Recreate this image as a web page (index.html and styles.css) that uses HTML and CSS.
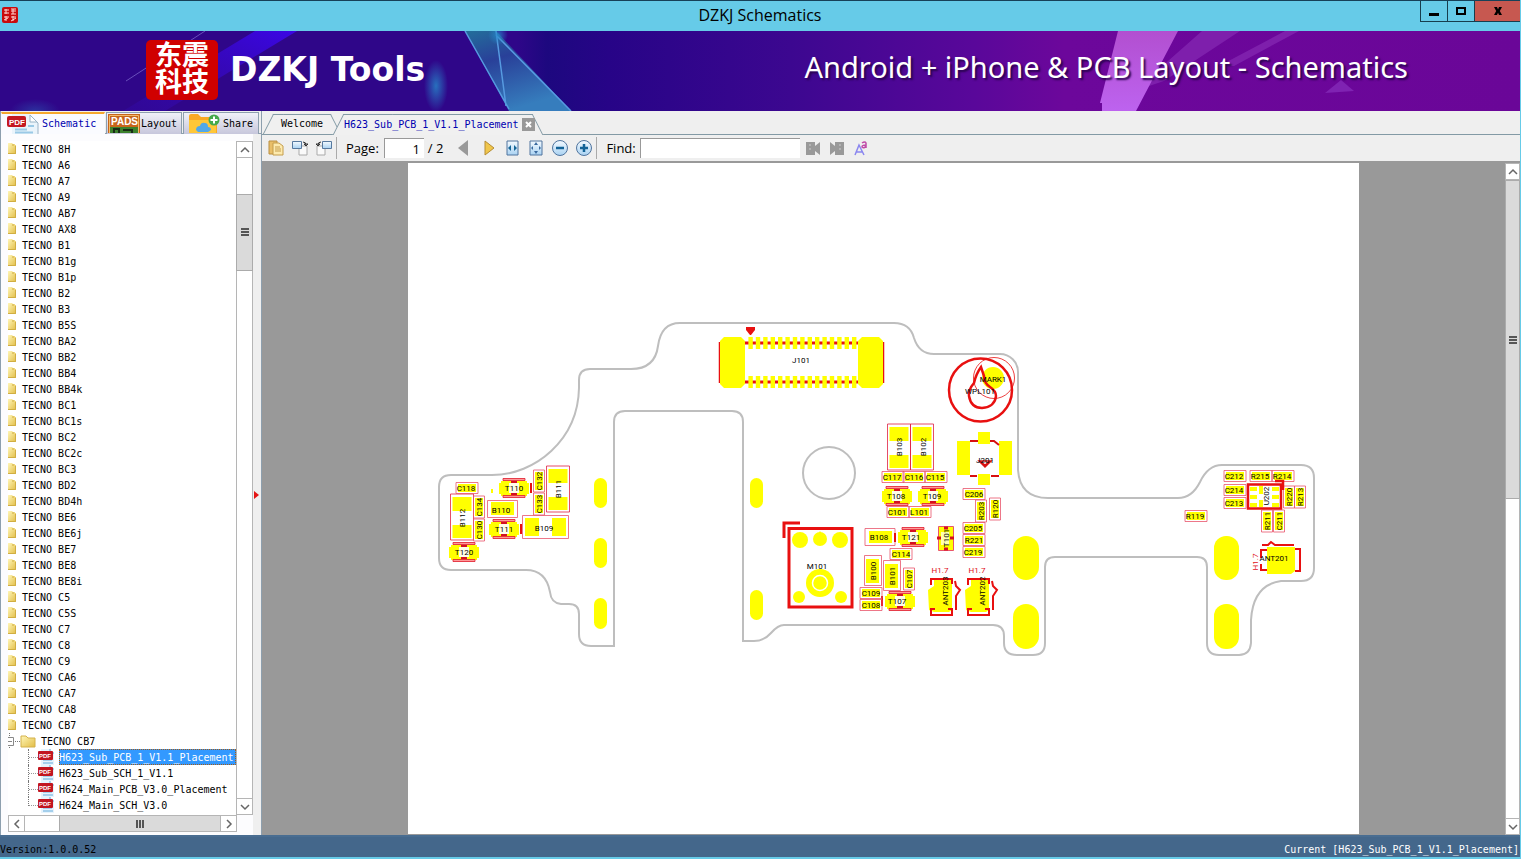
FILE: index.html
```html
<!DOCTYPE html>
<html lang="en">
<head>
<meta charset="utf-8">
<title>DZKJ Schematics</title>
<link rel="stylesheet" href="styles.css">
</head>
<body>
<svg class="defs" aria-hidden="true">
  <defs>
    <linearGradient id="gold" x2="1" y2="1"><stop stop-color="#fff6b8"/><stop offset="1" stop-color="#e2bd45"/></linearGradient>
    <linearGradient id="blue" x2="0" y2="1"><stop stop-color="#f4faff"/><stop offset="1" stop-color="#a9d2f2"/></linearGradient>
    <symbol id="folder" viewBox="0 0 9 12"><path d="M0 0h4l1 1h2v1h1v9H0z" fill="url(#gold)"/><path d="M0 10.500h7.500V3M5 1v2" fill="none" stroke="#d1ae42"/></symbol>
    <symbol id="pdf" viewBox="0 0 18 16"><path d="M4 0h9l4 4v12H4z" fill="#e6f3fc"/><path d="M13 0v4h4M6 11h9M6 14h10" fill="none" stroke="#8fc3e6" stroke-width="1.500"/><rect x="1" y="2" width="15" height="9" rx="1" fill="#c21620"/><text x="2" y="9" class="pdf-mark">PDF</text></symbol>
    <symbol id="t" viewBox="-16 -11 32 22"><path d="M-13-7h26v2h2V6h-2v2h-26V6h-2V-5h2z" fill="#ff0"/><path d="M-5-5H5V5H-5z" fill="#fffde8"/><path d="M-11-9.500h22v2h-22zM-11 7.500h22v2h-22z" fill="#f99" stroke="#e01828" stroke-width=".8"/><path d="M-3-7h6v2h-6zM-3 5h6v2h-6z" fill="#d41020"/></symbol>
    <symbol id="c" viewBox="-12 -6 24 12"><path d="M-9-4H9V4H-9z" fill="#ff0"/><path d="M-11-5.500h22v11h-22z" fill="none" stroke="#e9546b" stroke-width=".8"/></symbol>
    <symbol id="cv" viewBox="-6 -12 12 24"><path d="M-4-9H4V9H-4z" fill="#ff0"/><path d="M-5.500-11h11v22h-11z" fill="none" stroke="#e9546b" stroke-width=".8"/></symbol>
    <symbol id="b" viewBox="-12 -24 24 48"><path d="M-9.500-20h19v14h-19zM-9.500 8h19v13h-19z" fill="#ff0"/><path d="M-11.500-23h23v46h-23z" fill="none" stroke="#e02040" stroke-width=".8"/></symbol>
    <symbol id="ant" viewBox="-18 -23 38 46"><path d="M-9-15H9V16l-3 2H-9l-5-2-1-20 6-4z" fill="#ff0"/><path d="M-12-9v-6H9v5M-12 15v6H9v-6zM12-13l1 5 4 4-4 6v14" fill="none" stroke="#e81010" stroke-width="2"/><path d="M-8-14H5V17H-8z" fill="#ff0"/></symbol>
  </defs>
</svg>
<div class="app">
  <header class="titlebar">
    <svg class="app-icon" viewBox="0 0 16 16"><rect width="16" height="16" rx="2" fill="#c90c0c"/><path d="M2 3h5M4 2v5M2 6h5M9 2h5M9 4h5M9 7h5M11 2v5M2 10h5M4 9v5M2 13l4-2M9 10h5M11 9v5M9 14l5-3" stroke="#ffd9d5"/></svg>
    <h1>DZKJ Schematics</h1>
    <div class="window-buttons">
      <button aria-label="Minimize"><svg viewBox="0 0 12 12"><path d="M1 8h10v3H1z"/></svg></button>
      <button aria-label="Maximize"><svg viewBox="0 0 12 12"><path d="M1 2h10v8H1zM3 4v4h6V4z" fill-rule="evenodd"/></svg></button>
      <button class="close" aria-label="Close"><svg viewBox="0 0 12 12"><path d="M2 2h3l1 2.500L7 2h3L7.800 6 10 10H7L6 7.700 5 10H2l2.200-4z"/></svg></button>
    </div>
  </header>

  <div class="banner">
    <svg class="banner-art" viewBox="0 0 1520 80" preserveAspectRatio="none">
      <defs>
        <linearGradient id="bg"><stop stop-color="#2f0689"/><stop offset=".34" stop-color="#2f0689"/><stop offset=".36" stop-color="#1d087f"/><stop offset=".4" stop-color="#270487"/><stop offset=".52" stop-color="#3c0790"/><stop offset=".64" stop-color="#59079a"/><stop offset=".7" stop-color="#6c079b"/><stop offset="1" stop-color="#6a0698"/></linearGradient>
        <linearGradient id="ice" x2=".4" y2="1"><stop stop-color="#236f9b"/><stop offset=".4" stop-color="#294099"/><stop offset="1" stop-color="#367dbd"/></linearGradient>
        <linearGradient id="pink" x2="0" y2="1"><stop stop-color="#b24fd0"/><stop offset="1" stop-color="#bd63ef"/></linearGradient>
        <linearGradient id="ray" x1="1" y2="1" x2="0"><stop stop-color="#3b06e6"/><stop offset="1" stop-color="#340bb0" stop-opacity=".3"/></linearGradient>
        <radialGradient id="glow"><stop stop-color="#268acb" stop-opacity=".8"/><stop offset="1" stop-color="#268acb" stop-opacity="0"/></radialGradient>
      </defs>
      <path fill="url(#bg)" d="M0 0h1520v80H0z"/>
      <path fill="url(#ray)" d="M255 0h42L165 80h-42z"/>
      <path stroke="#694fbb" d="M205 0l-23 15M160 28l-34 22"/>
      <ellipse cx="436" cy="55" rx="12" ry="26" fill="url(#glow)"/>
      <ellipse cx="35" cy="80" rx="25" ry="12" fill="url(#glow)" opacity=".4"/>
      <path fill="url(#ice)" d="M465 0h31l75 80h-62z"/>
      <path fill="none" stroke="#569ae0" stroke-width="1.500" d="M465 0l44 78M496 0l10 75M496 4l75 76"/>
      <circle cx="498" cy="4" r="10" fill="url(#glow)"/>
      <path fill="#8428b2" d="M1202 0h38l-76 50-30 10zM1285 0h14l-65 35h-15z" opacity=".75"/>
      <path fill="url(#pink)" d="M1118 0h60l-42 80h-34v-8h-2z"/>
      <path fill="#842bb8" d="M1341 49l13 11-29 2z" opacity=".8"/>
    </svg>
    <div class="brand"><span class="seal"><span>东震</span><span>科技</span></span><span class="brand-name">DZKJ Tools</span></div>
    <div class="tagline">Android + iPhone &amp; PCB Layout - Schematics</div>
  </div>

  <main class="workspace">
    <aside class="sidebar">
      <nav class="side-tabs">
        <button class="side-tab active"><svg width="32" height="20" viewBox="0 0 32 20"><path d="M5 0h18l8 8v12H5z" fill="#eaf4fb"/><path d="M23 1v7h7" fill="#fff" stroke="#9ab4c6"/><path d="M23 1l8 8v11" fill="none" stroke="#9ab4c6"/><path d="M8 15.500h12M8 18.500h18M21 12h6" fill="none" stroke="#9ac9e6" stroke-width="2"/><rect y="2" width="19" height="11" rx="2" fill="#c41720"/><text x="2" y="11" class="pdf-big">PDF</text></svg>Schematic</button>
        <button class="side-tab"><svg width="32" height="20" viewBox="0 0 32 20"><path fill="#c7651b" d="M0 1h32v19H0z"/><path fill="#3c812c" d="M2 14h28v6H2z"/><path d="M6 20v-4h5v4M15 17h9v3" fill="none" stroke="#182c15" stroke-width="2"/><path fill="none" stroke="#f0bc6d" d="M1.500 20V2.500h29V20"/><text x="3" y="12" class="pads">PADS</text></svg>Layout</button>
        <button class="side-tab share"><svg width="32" height="20" viewBox="0 0 32 20"><path d="M1 3q0-2 2-2h7l3 3h14q2 0 2 2v14H1z" fill="#f9a823"/><path d="M1 20V7h27v13z" fill="#ffc738"/><path d="M8 17q0-4 4-4 1-4 5-3 3 0 3 4 3 0 3 3l-3 2H10z" fill="#52a8e9"/><circle cx="26" cy="7" r="5.500" fill="#45a94b"/><path d="M26 3.500v7M22.500 7h7" stroke="#fff" stroke-width="2"/></svg>Share</button>
      </nav>
      <div class="tree-box">
        <div class="tree-row-box">
        <ul class="tree">
          <li><svg><use href="#folder"/></svg>TECNO 8H</li><li><svg><use href="#folder"/></svg>TECNO A6</li><li><svg><use href="#folder"/></svg>TECNO A7</li><li><svg><use href="#folder"/></svg>TECNO A9</li><li><svg><use href="#folder"/></svg>TECNO AB7</li><li><svg><use href="#folder"/></svg>TECNO AX8</li><li><svg><use href="#folder"/></svg>TECNO B1</li><li><svg><use href="#folder"/></svg>TECNO B1g</li><li><svg><use href="#folder"/></svg>TECNO B1p</li><li><svg><use href="#folder"/></svg>TECNO B2</li><li><svg><use href="#folder"/></svg>TECNO B3</li><li><svg><use href="#folder"/></svg>TECNO B5S</li><li><svg><use href="#folder"/></svg>TECNO BA2</li><li><svg><use href="#folder"/></svg>TECNO BB2</li><li><svg><use href="#folder"/></svg>TECNO BB4</li><li><svg><use href="#folder"/></svg>TECNO BB4k</li><li><svg><use href="#folder"/></svg>TECNO BC1</li><li><svg><use href="#folder"/></svg>TECNO BC1s</li><li><svg><use href="#folder"/></svg>TECNO BC2</li><li><svg><use href="#folder"/></svg>TECNO BC2c</li><li><svg><use href="#folder"/></svg>TECNO BC3</li><li><svg><use href="#folder"/></svg>TECNO BD2</li><li><svg><use href="#folder"/></svg>TECNO BD4h</li><li><svg><use href="#folder"/></svg>TECNO BE6</li><li><svg><use href="#folder"/></svg>TECNO BE6j</li><li><svg><use href="#folder"/></svg>TECNO BE7</li><li><svg><use href="#folder"/></svg>TECNO BE8</li><li><svg><use href="#folder"/></svg>TECNO BE8i</li><li><svg><use href="#folder"/></svg>TECNO C5</li><li><svg><use href="#folder"/></svg>TECNO C5S</li><li><svg><use href="#folder"/></svg>TECNO C7</li><li><svg><use href="#folder"/></svg>TECNO C8</li><li><svg><use href="#folder"/></svg>TECNO C9</li><li><svg><use href="#folder"/></svg>TECNO CA6</li><li><svg><use href="#folder"/></svg>TECNO CA7</li><li><svg><use href="#folder"/></svg>TECNO CA8</li><li><svg><use href="#folder"/></svg>TECNO CB7</li>
          <li class="open"><svg class="wide" viewBox="0 0 28 16"><path d="M1.500 0v4M1.500 12v4M7 8.500h5" stroke="#777" stroke-dasharray="1 1"/><path d="M0 4.500h5.500v8H0M0 8.500h4" fill="none" stroke="#888"/><path d="M13 3h5l2 2h7v9H13z" fill="url(#gold)" stroke="#d4b14a"/></svg>TECNO CB7</li>
          <li class="file"><svg class="pdf-icon"><use href="#pdf"/></svg><span class="selected">H623_Sub_PCB_1_V1.1_Placement</span></li>
          <li class="file"><svg class="pdf-icon"><use href="#pdf"/></svg><span>H623_Sub_SCH_1_V1.1</span></li>
          <li class="file"><svg class="pdf-icon"><use href="#pdf"/></svg><span>H624_Main_PCB_V3.0_Placement</span></li>
          <li class="file last"><svg class="pdf-icon"><use href="#pdf"/></svg><span>H624_Main_SCH_V3.0</span></li>
        </ul>
        <div class="vscroll side"><button aria-label="Up"><svg viewBox="0 0 10 10"><path d="M1 7l4-4 4 4"/></svg></button><div class="track"><div class="thumb"></div></div><button aria-label="Down"><svg viewBox="0 0 10 10"><path d="M1 3l4 4 4-4"/></svg></button></div>
        </div>
        <div class="hscroll"><button aria-label="Left"><svg viewBox="0 0 10 10"><path d="M7 1L3 5l4 4"/></svg></button><div class="thumb"></div><button aria-label="Right"><svg viewBox="0 0 10 10"><path d="M3 1l4 4-4 4"/></svg></button></div>
      </div>
      <svg class="splitter" viewBox="0 0 5 8"><path d="M0 0l5 4-5 4z" fill="#e41515"/></svg>
    </aside>

    <section class="document">
      <nav class="doc-tabs">
        <button class="doc-tab welcome"><span>Welcome</span></button>
        <button class="doc-tab current"><span>H623_Sub_PCB_1_V1.1_Placement</span><svg width="13" height="13" viewBox="0 0 13 13"><path fill="#999" d="M0 0h13v13H0z"/><path d="M4 4l5 5M9 4L4 9" stroke="#fff" stroke-width="2"/></svg></button>
      </nav>
      <div class="toolbar">
        <button aria-label="Open"><svg viewBox="0 0 16 16"><path d="M1 1h8v13H1z" fill="#e9bf69" stroke="#b98f42"/><path d="M5 3h6l4 3v9H5z" fill="#fdeaae" stroke="#c49d4c"/><path d="M7 7h5M7 9h6M7 11h6" stroke="#c49d4c"/></svg></button>
        <button aria-label="Rotate right"><svg viewBox="0 0 16 16"><path d="M7 6h8v9H7z" fill="#fafafa" stroke="#aaa"/><path d="M.5 1.500h9v7h-9z" fill="url(#blue)" stroke="#57799f"/><path d="M11 2q3 0 3 3M12 4h4l-2 2z" fill="none" stroke="#333"/></svg></button>
        <button aria-label="Rotate left"><svg viewBox="0 0 16 16"><path d="M1 6h8v9H1z" fill="#fafafa" stroke="#aaa"/><path d="M6.500 1.500h9v7h-9z" fill="url(#blue)" stroke="#57799f"/><path d="M5 2Q2 2 2 5M0 4h4L2 6z" fill="none" stroke="#333"/></svg></button>
        <i class="sep"></i>
        <label for="page">Page:</label><input id="page" class="page-input" value="1"><span class="total">/ 2</span>
        <button class="nav" aria-label="Previous page"><svg viewBox="0 0 16 16"><path d="M13 0v16L3 8z" fill="#999"/></svg></button>
        <button class="nav" aria-label="Next page"><svg viewBox="0 0 16 16"><path d="M4 1v14l9-7z" fill="#f0c64c" stroke="#b68d34"/></svg></button>
        <button aria-label="Fit width"><svg viewBox="0 0 16 16"><path d="M3 1h11v14H3z" fill="url(#blue)" stroke="#50749e"/><path d="M7 5v6L4 8zM10 5v6l3-3z" fill="#176697"/></svg></button>
        <button aria-label="Fit page"><svg viewBox="0 0 16 16"><path d="M2 1h12v14H2z" fill="url(#blue)" stroke="#50749e"/><path d="M6 5l2-3 2 3zM6 11l2 3 2-3zM5 6v4L3 8zM11 6v4l2-2z" fill="#3a6a9f"/></svg></button>
        <button aria-label="Zoom out"><svg viewBox="0 0 16 16"><circle cx="8" cy="8" r="7.500" fill="url(#blue)" stroke="#50749e"/><path d="M4 8h8" stroke="#136397" stroke-width="2.500"/></svg></button>
        <button aria-label="Zoom in"><svg viewBox="0 0 16 16"><circle cx="8" cy="8" r="7.500" fill="url(#blue)" stroke="#50749e"/><path d="M4 8h8M8 4v8" stroke="#136397" stroke-width="2.500"/></svg></button>
        <i class="sep"></i>
        <label for="find">Find:</label><input id="find" class="find-input">
        <button aria-label="Find previous"><svg viewBox="0 0 16 16"><path d="M1 2h9v4l5-4v13l-5-4v4H1z" fill="#999"/><path d="M5 4v2M4 9h2" stroke="#ccc"/></svg></button>
        <button aria-label="Find next"><svg viewBox="0 0 16 16"><path d="M15 2H6v4L1 2v13l5-4v4h9z" fill="#999"/><path d="M11 4v2M10 9h2" stroke="#ccc"/></svg></button>
        <button aria-label="Match case"><svg viewBox="0 0 16 16"><path d="M2 15L6 5l5 10M3 12h6" fill="none" stroke="#8a86ef" stroke-width="1.500"/><path d="M9 3q3-2 4 0v5M13 5Q9 5 9 7q2 2 4-1" fill="none" stroke="#c04ba8" stroke-width="1.500"/></svg></button>
      </div>
      <div class="viewer">
        <div class="canvas">
          <svg class="board" viewBox="408 163 951 671" role="img" aria-label="PCB placement drawing">
            <g fill="none" stroke="#bebebe" stroke-width="2">
              <path d="M451 475H492C535 475 578 440 579 388V380Q579 369 590 369H631Q655 369 658 346Q661 323 680 323H894Q910 323 914 338Q919 354 934 354H1000A18 18 0 0 1 1018 372V470Q1020 498 1048 498H1178Q1192 498 1200 482Q1208 465 1222 465H1301Q1314 465 1314 478V568Q1314 581 1301 581H1281Q1253 585 1251 620V643Q1250 655 1239 655H1219Q1207 655 1207 643V567Q1207 557 1197 557H1055Q1045 557 1045 567V643Q1045 655 1033 655H1017Q1004 655 1004 643V636Q1004 625 993 625H784Q778 625 771 633Q764 641 754 641H743V422Q743 411 732 411H625Q614 411 614 422V646H591Q579 646 579 634V614Q579 604 569 604H561Q551 603 550 592Q546 570 526 570H451Q439 570 439 558V487Q439 475 451 475Z"/>
              <circle cx="829" cy="473" r="26"/>
            </g>
            <g fill="#ff0">
              <rect x="594" y="478" width="13" height="30" rx="6.500"/><rect x="594" y="538" width="13" height="30" rx="6.500"/><rect x="594" y="598" width="13" height="31" rx="6.500"/>
              <rect x="750" y="478" width="13" height="30" rx="6.500"/><rect x="750" y="590" width="13" height="30" rx="6.500"/>
              <rect x="1013" y="536" width="26" height="44" rx="13"/><rect x="1013" y="604" width="26" height="45" rx="13"/>
              <rect x="1214" y="536" width="25" height="44" rx="12"/><rect x="1214" y="604" width="25" height="45" rx="12"/>
              <path d="M491 489h2v4h-2z"/>
            </g>
            <!-- J101 connector -->
            <path d="M745 343H858M745 382H858" stroke="#e81010" stroke-width="3"/>
            <path d="M719.500 342v41M883.500 342v41" stroke="#e81010" stroke-width="1.500"/>
            <path d="M748.400 343H858M748.400 382H858" stroke="#ff0" stroke-width="12" stroke-dasharray="4.400 3"/>
            <path d="M724 337h17l4 4v43l-4 4h-17l-4-4v-43zM862 337h17l4 4v43l-4 4h-17l-4-4v-43z" fill="#ff0"/>
            <path d="M746 327h9v3l-4 5h-1l-4-5z" fill="#e81010"/>
            <!-- Mark and WPL101 -->
            <circle cx="993" cy="378" r="11" fill="#ff0"/>
            <g fill="none" stroke="#e81010"><circle cx="994" cy="378" r="20.500" stroke-width=".8"/><circle cx="980.500" cy="390" r="31.500" stroke-width="2.500"/><path d="M981 367Q976 374 974 383Q968 390 969 396Q971 408 982 408Q995 407 996 396Q996 391 990 387Q984 383 984 376Z" stroke-width="2.500"/></g>
            <!-- J201 -->
            <path d="M957 441h13v34h-13zM999 441h13v34h-13zM978 432h12v12h-12zM978 474h12v11h-12z" fill="#ff0"/>
            <path d="M970 441h8M990 441h4l5 4M970 476h7M991 476h8" fill="none" stroke="#d81010" stroke-width="2"/><path d="M979 461h12l-6 6zM981 462l4 3 4-3" fill="none" stroke="#d81010" stroke-width="1.500"/>
            <!-- M101 -->
            <g fill="#ff0"><circle cx="800" cy="540" r="8"/><path d="M820 531l2 3h-4z"/><circle cx="820" cy="539" r="7"/><circle cx="840" cy="540" r="8"/><circle cx="799" cy="597" r="6"/><circle cx="841" cy="597" r="6"/><circle cx="820" cy="583" r="14"/></g>
            <circle cx="820" cy="583" r="7.500" fill="none" stroke="#fff" stroke-width="1.500"/>
            <path d="M789 528.500h63V607h-63zM784 538v-15h16" fill="none" stroke="#e81010" stroke-width="3"/>
            <!-- tall parts -->
            <use href="#b" x="546" y="465" width="24" height="48"/><use href="#b" x="450" y="493" width="24" height="48"/><use href="#b" x="887" y="423" width="24" height="48"/><use href="#b" x="910" y="423" width="24" height="48"/>
            <path d="M525 518h14v18h-14zM552 518h14v18h-14zM491 502h23v13h-23zM869 531h23v12h-23zM866 559h13v24h-13zM885 564h13v24h-13z" fill="#ff0"/>
            <path d="M522.500 515.500h46v23h-46zM487.500 500.500h30v17h-30zM865 528.500h30v17h-30zM864.500 555.500h17v30h-17zM883.500 560.500h17v30h-17z" fill="none" stroke="#e9546b" stroke-width=".8"/>
            <!-- diodes -->
            <use href="#t" x="498" y="477" width="32" height="22"/><use href="#t" x="488" y="518" width="32" height="22"/><use href="#t" x="448" y="541" width="32" height="22"/><use href="#t" x="881" y="485" width="32" height="22"/><use href="#t" x="917" y="485" width="32" height="22"/><use href="#t" x="897" y="526" width="32" height="22"/><use href="#t" x="884" y="590" width="32" height="22"/>
            <path d="M530 483h2v10h-2zM520 524h2v10h-2zM894 533h2v9h-2zM881 596h2v10h-2z" fill="#e81010"/>
            <path d="M938.500 526.500h15v24h-15z" fill="#ff0" stroke="#e9546b"/><path d="M941 532h8v13h-8z" fill="#ffffb0"/><path d="M937 538h4M950 538h4M944 528h4M944 549h4" stroke="#d41020" stroke-width="3"/>
            <!-- small passives -->
            <use href="#c" x="455" y="482" width="24" height="12"/><use href="#c" x="881" y="471" width="24" height="12"/><use href="#c" x="902" y="471" width="24" height="12"/><use href="#c" x="924" y="471" width="24" height="12"/><use href="#c" x="886" y="506" width="24" height="12"/><use href="#c" x="908" y="506" width="24" height="12"/><use href="#c" x="962" y="488" width="24" height="12"/><use href="#c" x="962" y="522" width="24" height="12"/><use href="#c" x="962" y="534" width="24" height="12"/><use href="#c" x="962" y="546" width="24" height="12"/><use href="#c" x="889" y="548" width="24" height="12"/><use href="#c" x="859" y="587" width="24" height="12"/><use href="#c" x="859" y="599" width="24" height="12"/><use href="#c" x="1223" y="470" width="24" height="12"/><use href="#c" x="1249" y="470" width="24" height="12"/><use href="#c" x="1271" y="470" width="24" height="12"/><use href="#c" x="1223" y="484" width="24" height="12"/><use href="#c" x="1223" y="497" width="24" height="12"/><use href="#c" x="1184" y="510" width="24" height="12"/>
            <use href="#cv" x="473" y="495" width="12" height="24"/><use href="#cv" x="473" y="518" width="12" height="24"/><use href="#cv" x="533" y="469" width="12" height="24"/><use href="#cv" x="533" y="492" width="12" height="24"/><use href="#cv" x="975" y="499" width="12" height="24"/><use href="#cv" x="989" y="497" width="12" height="24"/><use href="#cv" x="903" y="567" width="12" height="24"/><use href="#cv" x="1283" y="485" width="12" height="24"/><use href="#cv" x="1294" y="485" width="12" height="24"/><use href="#cv" x="1261" y="509" width="12" height="24"/><use href="#cv" x="1273" y="509" width="12" height="24"/>
            <!-- U202 -->
            <path d="M1248 484.500h33v24h-33z" fill="#fff" stroke="#e81010" stroke-width="2.500"/><path d="M1250 487h7v4h-7zM1250 495h7v4h-7zM1250 503h7v4h-7zM1272 487h7v4h-7zM1272 495h7v4h-7zM1272 503h7v4h-7zM1259 486h4v8h-4zM1259 500h4v7h-4z" fill="#ff0"/><path d="M1275 481h8v9" fill="none" stroke="#e81010" stroke-width="2.500"/>
            <!-- antenna pads -->
            <use href="#ant" x="925" y="571" width="38" height="46"/><use href="#ant" x="962" y="571" width="38" height="46"/>
            <path d="M1267 547h28v24l-4 3h-24z" fill="#ff0"/><path d="M1262 545h6l3-3 4 3h19M1267 550h-6v8M1261 564v6h6M1295 549h5v22h-5" fill="none" stroke="#e81010" stroke-width="2"/>
            <g class="ref">
              <text x="801" y="363">J101</text><text x="993" y="382">MARK1</text><text x="980" y="394">WPL101</text><text x="985" y="463">J201</text><text x="817" y="569">M101</text>
              <text x="466" y="491">C118</text><text x="892" y="480">C117</text><text x="914" y="480">C116</text><text x="935" y="480">C115</text><text x="897" y="515">C101</text><text x="919" y="515">L101</text><text x="974" y="497">C206</text><text x="973" y="531">C205</text><text x="974" y="543">R221</text><text x="973" y="555">C219</text><text x="901" y="557">C114</text><text x="871" y="596">C109</text><text x="871" y="608">C108</text>
              <text x="1234" y="479">C212</text><text x="1260" y="479">R215</text><text x="1282" y="479">R214</text><text x="1234" y="493">C214</text><text x="1234" y="506">C213</text><text x="1195" y="519">R119</text><text x="1274" y="561">ANT201</text>
              <text x="514" y="491">T110</text><text x="504" y="532">T111</text><text x="464" y="555">T120</text><text x="896" y="499">T108</text><text x="932" y="499">T109</text><text x="911" y="540">T121</text><text x="897" y="604">T107</text><text x="501" y="513">B110</text><text x="544" y="531">B109</text><text x="879" y="540">B108</text>
              <text transform="translate(561 489) rotate(-90)">B111</text><text transform="translate(465 518) rotate(-90)">B112</text><text transform="translate(902 447) rotate(-90)">B103</text><text transform="translate(926 447) rotate(-90)">B102</text><text transform="translate(542 481) rotate(-90)">C132</text><text transform="translate(542 504) rotate(-90)">C133</text><text transform="translate(482 507) rotate(-90)">C134</text><text transform="translate(482 530) rotate(-90)">C130</text><text transform="translate(984 511) rotate(-90)">R203</text><text transform="translate(998 509) rotate(-90)">R120</text><text transform="translate(949 538) rotate(-90)">T101</text><text transform="translate(876 571) rotate(-90)">B100</text><text transform="translate(895 576) rotate(-90)">B101</text><text transform="translate(912 579) rotate(-90)">C107</text><text transform="translate(948 591) rotate(-90)">ANT203</text><text transform="translate(985 591) rotate(-90)">ANT202</text><text transform="translate(1269 496) rotate(-90)">U202</text><text transform="translate(1292 497) rotate(-90)">R220</text><text transform="translate(1303 497) rotate(-90)">R213</text><text transform="translate(1270 521) rotate(-90)">R211</text><text transform="translate(1282 521) rotate(-90)">C211</text>
              <g class="height"><text x="940" y="573">H1.7</text><text x="977" y="573">H1.7</text><text transform="translate(1258 562) rotate(-90)">H1.7</text></g>
            </g>
          </svg>
        </div>
        <div class="vscroll main"><button aria-label="Up"><svg viewBox="0 0 10 10"><path d="M1 7l4-4 4 4"/></svg></button><div class="track"><div class="thumb"></div></div><button aria-label="Down"><svg viewBox="0 0 10 10"><path d="M1 3l4 4 4-4"/></svg></button></div>
      </div>
    </section>
  </main>
  <footer class="statusbar"><span>Version:1.0.0.52</span><span class="path">Current [H623_Sub_PCB_1_V1.1_Placement]</span></footer>
</div>
</body>
</html>
```
FILE: styles.css
```css
* { box-sizing: border-box; }
body { margin: 0; font: 10px/16px "DejaVu Sans Mono", monospace; color: #000; }
button { margin: 0; padding: 0; border: 0; background: none; font: inherit; color: inherit; }
svg { display: block; flex: none; }
.defs { position: absolute; width: 0; height: 0; }
.app { display: flex; flex-direction: column; height: 100vh; border-right: 1px solid #66cbe8; border-bottom: 2px solid #66cbe8; background: #efefef; overflow: hidden; }

.titlebar { display: grid; grid-template-columns: 1fr auto 1fr; align-items: start; flex: none; height: 31px; border-top: 1px solid #174158; background: #66cbe8; }
.app-icon { width: 16px; height: 16px; margin: 6px 2px; }
h1 { margin: 0; font: 16px/29px "Open Sans", sans-serif; }
.window-buttons { display: flex; justify-self: end; height: 21px; border: solid #173e4e; border-width: 0 0 1px 1px; }
.window-buttons button { display: grid; place-items: center; width: 27px; border-right: 1px solid #173e4e; }
.window-buttons .close { width: 45px; border: 0; background: #c75850; }
.window-buttons svg { width: 12px; height: 12px; }

.banner { position: relative; display: flex; justify-content: space-between; align-items: center; flex: none; height: 80px; padding: 0 112px 0 146px; color: #fff; }
.banner-art { position: absolute; inset: 0; width: 100%; height: 100%; }
.brand { position: relative; display: flex; align-items: center; gap: 12px; padding-bottom: 2px; }
.seal { display: flex; flex-direction: column; align-items: center; justify-content: center; width: 72px; height: 60px; border-radius: 5px; background: #d00000; font: 700 27px/27px "Liberation Sans", "Noto Sans CJK SC", sans-serif; }
.seal span { height: 27px; }
.brand-name { font: 700 33px/40px "DejaVu Sans", sans-serif; }
.tagline { position: relative; padding-bottom: 9px; font: 29px/36px "Noto Sans", sans-serif; text-shadow: 2px 2px 2px #2a0450; }

.workspace { display: flex; flex: 1; min-height: 0; }
.sidebar { position: relative; display: flex; flex-direction: column; flex: none; width: 262px; border-left: 1px solid #8d9fae; border-right: 1px solid #8d9fae; background: #efefef; }
.side-tabs { display: flex; height: 23px; flex: none; gap: 1px; padding-top: 1px; border-bottom: 1px solid #8d9fae; }
.side-tab { display: flex; align-items: center; gap: 1px; width: 76px; height: 22px; padding-left: 1px; border: 1px solid #8d9fae; border-bottom: 0; background: linear-gradient(#f0f0f8, #c7c7dc); }
.side-tab.active { gap: 3px; width: 104px; padding-left: 5px; border-color: #f5a72d transparent; border-top-width: 2px; background: #fafbff; color: #0000b0; }
.side-tab.share { gap: 3px; padding-left: 4px; }
.side-tab svg { align-self: flex-start; }
.tree-box { display: flex; flex-direction: column; flex: 1; min-height: 0; margin-right: 8px; padding: 7px 0 3px 7px; background: #fcfcfe; }
.tree-row-box { display: flex; flex: 1; min-height: 0; }
.tree { flex: 1; min-width: 0; margin: 0; padding: 0; overflow: hidden; list-style: none; background: #fff; line-height: 18px; }
.tree li { display: flex; align-items: flex-start; height: 16px; gap: 5px; white-space: nowrap; }
.tree li svg { width: 9px; height: 12px; margin-top: 2px; }
.tree li .wide { width: 28px; height: 16px; margin: 0; }
.tree li .pdf-icon { width: 18px; height: 16px; margin: 0; }
.tree .file { position: relative; padding-left: 29px; gap: 4px; }
.tree .file::before { content: ""; position: absolute; left: 20px; top: 0; width: 10px; height: 16px; border-left: 1px dotted #777; background: linear-gradient(90deg, #999 50%, transparent 50%) 0 8px / 2px 1px repeat-x; }
.tree .file.last::before { height: 9px; }
.tree .selected { outline: 1px dotted #a65b13; outline-offset: -1px; background: #3399ff; color: #fff; }
.tree .file span { flex: 1; height: 16px; }
.pdf-mark { font: 700 6px "Liberation Sans", sans-serif; fill: #fff; }
.pdf-big { font: 700 8px "Liberation Sans", sans-serif; fill: #fff; }
.pads { font: 700 10px "Liberation Sans", sans-serif; fill: #fff; }
.splitter { position: absolute; right: 2px; top: 53%; width: 5px; height: 8px; margin-top: -4px; }

.vscroll, .hscroll { display: flex; flex: none; background: #fff; }
.vscroll { flex-direction: column; width: 17px; }
.vscroll button, .hscroll button { display: grid; place-items: center; flex: none; width: 17px; height: 17px; border: 1px solid #b5b5b5; background: #fff; }
.vscroll svg, .hscroll svg { width: 10px; height: 10px; fill: none; stroke: #666; stroke-width: 1.5; }
.track { flex: 1; border: solid #b5b5b5; border-width: 0 1px; }
.thumb { display: grid; place-items: center; border: 1px solid #ababab; background: #dadada; }
.thumb::after { content: ""; width: 8px; height: 8px; background: repeating-linear-gradient(#555 0 2px, transparent 2px 3px); }
.side .thumb { height: 12%; margin: 36px -1px 0; }
.hscroll { justify-content: space-between; width: 229px; height: 17px; border: solid #b5b5b5; border-width: 1px 0; }
.hscroll button { height: 15px; border-width: 0 1px; }
.hscroll .thumb { flex: 1; margin-left: 34px; border-width: 0 0 0 1px; }
.hscroll .thumb::after { background: repeating-linear-gradient(90deg, #555 0 2px, transparent 2px 3px); }

.document { display: flex; flex-direction: column; flex: 1; min-width: 0; }
.doc-tabs { display: flex; flex: none; height: 24px; padding: 3px 0 0 6px; border-bottom: 1px solid #839aa5; }
.doc-tab { position: relative; display: flex; align-items: center; height: 20px; }
.doc-tab::before, .doc-tab::after { content: ""; position: absolute; top: 0; bottom: 0; border-top: 1px solid #839aa5; background: #f0f0f0; }
.doc-tab::before { left: 0; right: 30%; border-left: 1px solid #839aa5; transform: skewX(-27deg); }
.doc-tab::after { left: 30%; right: 0; border-right: 1px solid #839aa5; transform: skewX(27deg); }
.doc-tab span, .doc-tab svg { position: relative; z-index: 1; }
.welcome { width: 68px; padding-left: 13px; }
.current { gap: 3px; height: 21px; width: 200px; margin-left: 2px; padding-left: 6px; color: #0000b0; }
.toolbar { display: flex; align-items: center; flex: none; height: 28px; padding: 0 6px; gap: 8px; border-bottom: 2px solid #999; font: 13px/18px "Open Sans", sans-serif; }
.toolbar svg { width: 16px; height: 16px; }
.sep { width: 1px; height: 22px; margin: 0 1px 0 -4px; background: #aaa; }
.toolbar input { height: 20px; border: solid #999; border-width: 1px 0 0 1px; background: #fff; font: inherit; border-radius: 0; outline: 0; }
.page-input { width: 40px; padding: 0 4px; margin-left: -3px; text-align: right; }
.total { margin: 0 4px 0 -4px; }
.nav { margin-right: 2px; }
.nav + .nav { margin-right: -1px; }
.find-input { width: 160px; margin: 0 -3px 0 -4px; }
.viewer { display: flex; flex: 1; min-height: 0; }
.canvas { flex: 1; min-width: 0; padding: 0 146px; overflow: hidden; background: #999; }
.board { width: 100%; height: auto; background: #fff; }
.ref { font: 8px Roboto, "Liberation Sans", sans-serif; text-anchor: middle; fill: #000; }
.height { fill: #e01020; }
.main { width: 15px; }
.main button { width: 15px; }
.main .thumb { height: 50%; margin: 0 -1px; }

.statusbar { display: flex; justify-content: space-between; align-items: end; flex: none; height: 22px; padding-right: 1px; border-top: 2px solid #496d91; background: #44678b; line-height: 15px; }
.statusbar .path { color: #fff; }
```
